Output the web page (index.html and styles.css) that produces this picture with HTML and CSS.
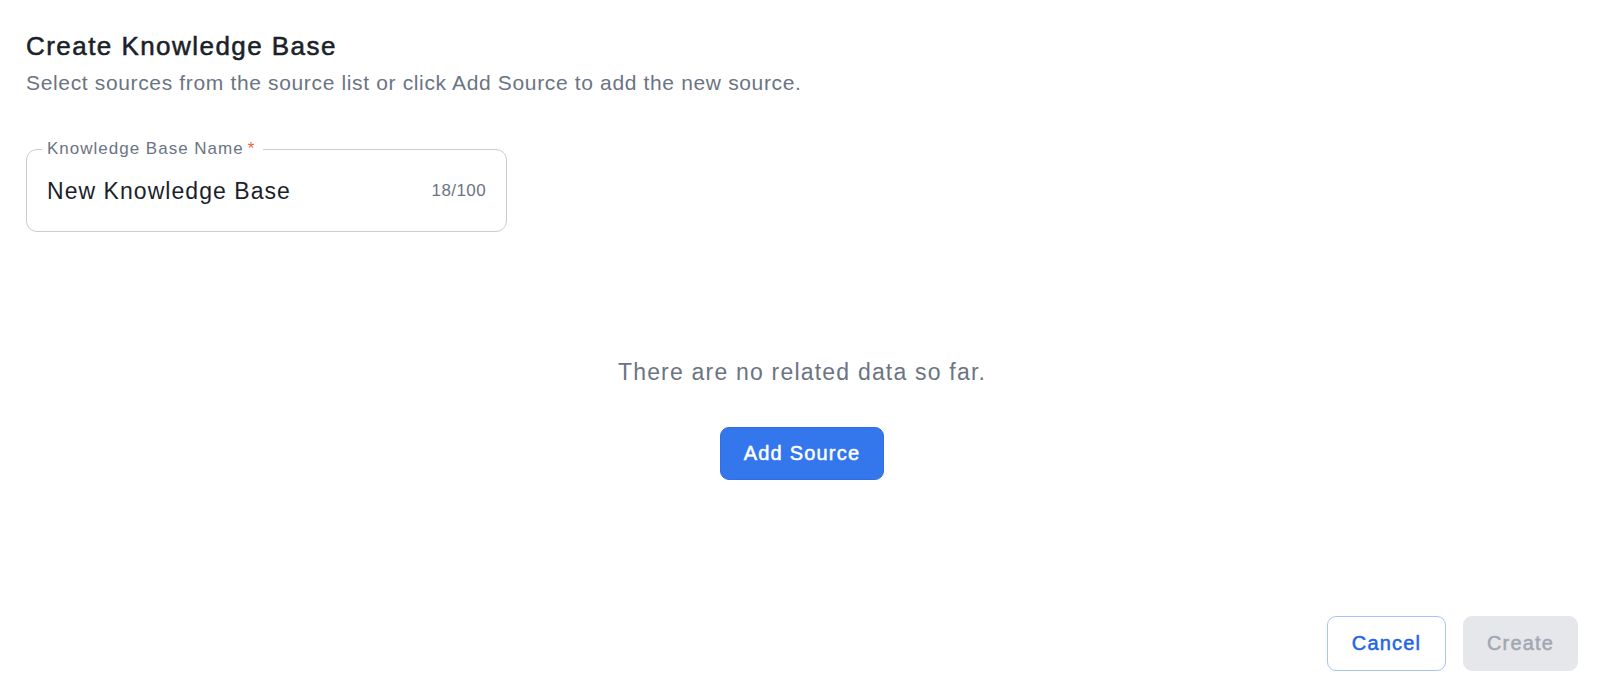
FILE: index.html
```html
<!DOCTYPE html>
<html lang="en">
<head>
<meta charset="utf-8">
<title>Create Knowledge Base</title>
<link rel="stylesheet" href="styles.css">
</head>
<body>
<div class="page">
  <header class="header">
    <h1 class="title">Create Knowledge Base</h1>
    <p class="subtitle">Select sources from the source list or click Add Source to add the new source.</p>
  </header>
  <fieldset class="field">
    <legend class="field-label">Knowledge Base Name<span class="req">*</span></legend>
    <div class="field-row">
      <span class="field-value">New Knowledge Base</span>
      <span class="field-count">18/100</span>
    </div>
  </fieldset>
  <section class="empty">
    <p class="empty-text">There are no related data so far.</p>
    <button class="btn btn-primary">Add Source</button>
  </section>
  <footer class="footer">
    <button class="btn btn-outline">Cancel</button>
    <button class="btn btn-disabled">Create</button>
  </footer>
</div>
</body>
</html>
```
FILE: styles.css
```css
* { box-sizing: border-box; }
html, body { margin: 0; padding: 0; background: #fff; }
body { font-family: "Liberation Sans", Arial, sans-serif; color: #1b1f2a; }
.page {
  height: 699px;
  padding: 30px 22px 28px 26px;
  display: flex;
  flex-direction: column;
}
.title {
  margin: 0;
  font-size: 26px;
  font-weight: 400;
  letter-spacing: 1.45px;
  line-height: 32px;
  color: #1b1f2a;
  -webkit-text-stroke: 0.55px #1b1f2a;
}
.subtitle {
  margin: 7px 0 0;
  font-size: 21px;
  letter-spacing: 0.65px;
  line-height: 28px;
  color: #6b7482;
}
.field {
  margin: 43px 0 0;
  width: 481px;
  border: 1px solid #c9ccd3;
  border-radius: 11px;
  padding: 0 20px 7px;
  min-width: 0;
}
.field-label {
  margin-left: -5px;
  padding: 0 8px 0 5px;
  font-size: 17px;
  letter-spacing: 1px;
  line-height: 18px;
  color: #6b7482;
}
.req { color: #f0623c; margin-left: 4px; }
.field-row {
  display: flex;
  align-items: center;
  justify-content: space-between;
  height: 66px;
}
.field-value { font-size: 23px; letter-spacing: 1.05px; color: #1b1f2a; }
.field-count { font-size: 17px; letter-spacing: 0.4px; color: #6b7482; }
.empty {
  flex: 1;
  display: flex;
  flex-direction: column;
  align-items: center;
  padding-top: 126px;
}
.empty-text {
  margin: 0;
  font-size: 23px;
  letter-spacing: 1.2px;
  line-height: 28px;
  color: #6b7482;
}
.btn {
  font-family: inherit;
  font-size: 20px;
  font-weight: 400;
  letter-spacing: 1.2px;
  border-radius: 9px;
  cursor: pointer;
  padding: 0;
}
.btn-primary {
  margin-top: 41px;
  width: 164px;
  height: 53px;
  background: #3476eb;
  border: 1px solid #2e6fe4;
  color: #fff;
  -webkit-text-stroke: 0.5px #fff;
}
.footer { display: flex; justify-content: flex-end; gap: 17px; }
.btn-outline {
  width: 119px;
  height: 55px;
  background: #fff;
  border: 1px solid #a9c3f6;
  color: #1d64e8;
  -webkit-text-stroke: 0.5px #1d64e8;
}
.btn-disabled {
  width: 115px;
  height: 55px;
  background: #e5e7eb;
  border: 1px solid #e5e7eb;
  color: #a1a7b1;
  -webkit-text-stroke: 0.5px #a1a7b1;
}
```
